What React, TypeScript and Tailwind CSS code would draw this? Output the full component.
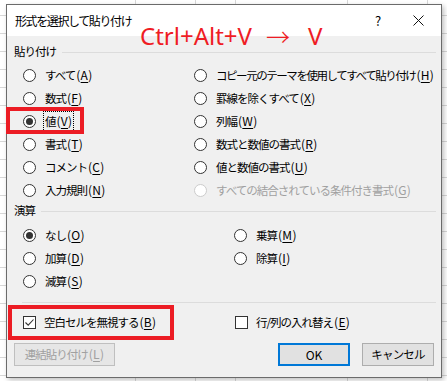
import clsx from "clsx";

const rowLines = Array.from({ length: 22 }, (_, i) => 15 + i * 18);
const colLines = [135, 195, 235, 347, 427];

function Radio({ checked, disabled }: { checked?: boolean; disabled?: boolean }) {
  return (
    <span
      className={clsx(
        "w-[13px] h-[13px] rounded-full border bg-white flex items-center justify-center shrink-0",
        disabled ? "border-[#cccccc]" : "border-[#333333]",
      )}
    >
      {checked && <span className="w-[7px] h-[7px] rounded-full bg-[#333333]" />}
    </span>
  );
}

function Label({
  text,
  acc,
  disabled,
  tight,
}: {
  text: string;
  acc: string;
  disabled?: boolean;
  tight?: boolean;
}) {
  return (
    <span className={clsx("whitespace-nowrap text-[11.5px]", disabled ? "text-[#a0a0a0]" : "text-black")}>
      <span className={tight ? "tracking-[-1.45px]" : "tracking-[-1px]"}>{text}</span>
      <span className="text-[12px] tracking-[0.3px] ml-[1px]">
        (<span className="underline underline-offset-2">{acc}</span>)
      </span>
    </span>
  );
}

function Option({
  text,
  acc,
  checked,
  disabled,
  focus,
  tight,
}: {
  text: string;
  acc: string;
  checked?: boolean;
  disabled?: boolean;
  focus?: boolean;
  tight?: boolean;
}) {
  return (
    <div className="h-[23px] flex items-center gap-[7px]">
      <Radio checked={checked} disabled={disabled} />
      <span className={clsx("px-[1px]", focus ? "border border-dotted border-black" : "border border-transparent")}>
        <Label text={text} acc={acc} disabled={disabled} tight={tight} />
      </span>
    </div>
  );
}

function Checkbox({ checked }: { checked?: boolean }) {
  return (
    <span className="w-[13px] h-[13px] border border-[#333333] bg-white flex items-center justify-center shrink-0">
      {checked && (
        <svg width="11" height="11" viewBox="0 0 11 11">
          <path d="M1.5 5.5 L4.2 8.2 L9.5 2.5" fill="none" stroke="#333" strokeWidth="1.1" />
        </svg>
      )}
    </span>
  );
}

function SectionHead({ title }: { title: string }) {
  return (
    <div className="h-[16px] flex items-center gap-[6px] pl-[7px] pr-[5px]">
      <span className="whitespace-nowrap text-[11.5px] tracking-[-1px]">{title}</span>
      <span className="flex-1 h-px bg-[#dcdcdc]" />
    </div>
  );
}

export default function App() {
  return (
    <div className="relative w-[447px] h-[381px] bg-white overflow-hidden font-['Noto_Sans_CJK_JP',sans-serif] text-[12px] text-black">
      {/* spreadsheet grid behind the dialog */}
      <div className="absolute inset-0">
        {rowLines.map((y) => (
          <div key={y} className="absolute left-0 right-0 h-px bg-[#d8d8d8]" style={{ top: y }} />
        ))}
        {colLines.map((x) => (
          <div key={x} className="absolute top-0 bottom-0 w-px bg-[#d8d8d8]" style={{ left: x }} />
        ))}
      </div>

      <div className="relative ml-[6px] mt-[4px] w-[436px] h-[374px] border border-[#6b6b6b] flex flex-col shadow-[2px_2px_5px_rgba(0,0,0,0.25)]">
        {/* title bar */}
        <div className="h-[31px] bg-white flex items-center pl-[8px]">
          <span className="text-[12px] tracking-[-1.4px]">形式を選択して貼り付け</span>
          <span className="ml-auto w-[20px] text-center text-[13px]">?</span>
          <span className="ml-[24px] mr-[17px] w-[12px] h-[12px] flex items-center justify-center">
            <svg width="11" height="11" viewBox="0 0 11 11">
              <path d="M0.5 0.5 L10.5 10.5 M10.5 0.5 L0.5 10.5" stroke="#111" strokeWidth="1" />
            </svg>
          </span>
        </div>

        {/* body */}
        <div className="flex-1 bg-[#f0f0f0] flex flex-col">
          <div className="mt-[8px]">
            <SectionHead title="貼り付け" />
          </div>
          <div className="mt-[4px] grid grid-cols-[171px_1fr] pl-[16px]">
            <div className="flex flex-col">
              <Option text="すべて" acc="A" />
              <Option text="数式" acc="F" />
              <Option text="値" acc="V" checked focus />
              <Option text="書式" acc="T" />
              <Option text="コメント" acc="C" />
              <Option text="入力規則" acc="N" />
            </div>
            <div className="flex flex-col">
              <Option text="コピー元のテーマを使用してすべて貼り付け" acc="H" tight />
              <Option text="罫線を除くすべて" acc="X" />
              <Option text="列幅" acc="W" />
              <Option text="数式と数値の書式" acc="R" />
              <Option text="値と数値の書式" acc="U" />
              <Option text="すべての結合されている条件付き書式" acc="G" disabled />
            </div>
          </div>

          <div className="mt-[1px]">
            <SectionHead title="演算" />
          </div>
          <div className="mt-[5px] grid grid-cols-[211px_1fr] pl-[16px]">
            <div className="flex flex-col">
              <Option text="なし" acc="O" checked />
              <Option text="加算" acc="D" />
              <Option text="減算" acc="S" />
            </div>
            <div className="flex flex-col">
              <Option text="乗算" acc="M" />
              <Option text="除算" acc="I" />
            </div>
          </div>

          <div className="mt-[9px] ml-[15px] mr-[5px] h-px bg-[#dcdcdc]" />

          <div className="mt-[8px] h-[23px] grid grid-cols-[212px_1fr] items-center pl-[16px]">
            <div className="flex items-center gap-[8px]">
              <Checkbox checked />
              <Label text="空白セルを無視する" acc="B" />
            </div>
            <div className="flex items-center gap-[8px]">
              <Checkbox />
              <Label text="行/列の入れ替え" acc="E" />
            </div>
          </div>

          <div className="mt-[9px] flex items-center pl-[7px] pr-[7px]">
            <button className="w-[101px] h-[23px] border border-[#bfbfbf] bg-[#e6e6e6] text-[#a0a0a0]">
              <Label text="連結貼り付け" acc="L" disabled />
            </button>
            <button className="ml-auto w-[72px] h-[23px] border-2 border-[#0078d7] bg-[#e1e1e1]">
              OK
            </button>
            <button className="ml-[12px] w-[72px] h-[23px] border border-[#adadad] bg-[#e1e1e1] text-[11.5px] tracking-[-0.8px]">
              キャンセル
            </button>
          </div>
        </div>
      </div>

      {/* annotations */}
      <div className="absolute left-[140px] top-[24px] text-[24px] leading-[24px] text-[#ef1c24] font-['Noto_Sans',sans-serif] whitespace-nowrap flex">
        <span>Ctrl+Alt+V</span>
        <span className="ml-[14px] font-['Noto_Sans_CJK_JP',sans-serif] font-light">→</span>
        <span className="ml-[18px]">V</span>
      </div>
      <div className="absolute left-[6px] top-[107px] w-[78px] h-[27px] border-4 border-[#ec1c24]" />
      <div className="absolute left-[8px] top-[305px] w-[166px] h-[35px] border-4 border-[#ec1c24]" />
    </div>
  );
}
